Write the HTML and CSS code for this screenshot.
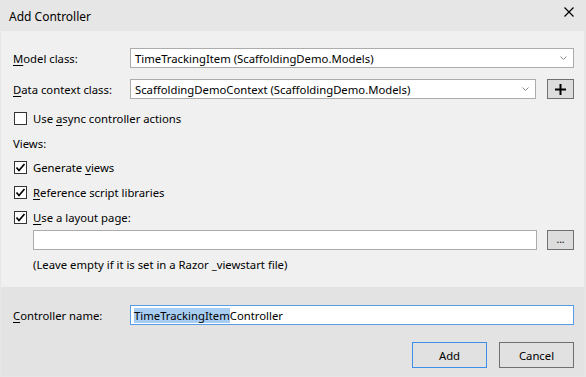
FILE: index.html
```html
<!DOCTYPE html>
<html>
<head>
<meta charset="utf-8">
<link rel="stylesheet" href="styles.css">
</head>
<body>
<div class="dialog">
  <div class="titlebar">
    <span class="title">Add Controller</span>
    <svg class="close" width="10" height="10" viewBox="0 0 10 10"><path d="M0.5 0.5L9.5 9.5M9.5 0.5L0.5 9.5" stroke="#000" stroke-width="1.2"/></svg>
  </div>
  <div class="content">
    <div class="row r1">
      <span class="label"><u>M</u>odel class:</span>
      <div class="combo wide"><span>TimeTrackingItem (ScaffoldingDemo.Models)</span><svg class="chev" width="7" height="4" viewBox="0 0 7 4"><path d="M0.5 0.5L3.5 3.5L6.5 0.5" fill="none" stroke="#8a8a8a"/></svg></div>
    </div>
    <div class="row r2">
      <span class="label"><u>D</u>ata context class:</span>
      <div class="combo"><span>ScaffoldingDemoContext (ScaffoldingDemo.Models)</span><svg class="chev" width="7" height="4" viewBox="0 0 7 4"><path d="M0.5 0.5L3.5 3.5L6.5 0.5" fill="none" stroke="#8a8a8a"/></svg></div>
      <div class="sqbtn"><svg width="11" height="11" viewBox="0 0 11 11"><path d="M5.5 0V11M0 5.5H11" stroke="#000" stroke-width="2"/></svg></div>
    </div>
    <div class="check r3"><span class="box"></span><span>Use <u>a</u>sync controller actions</span></div>
    <div class="views">Views:</div>
    <div class="check r5"><span class="box on"><svg width="11" height="11" viewBox="0 0 11 11"><path d="M1.5 5.5L4 8.5L9.5 2" fill="none" stroke="#000" stroke-width="1.7"/></svg></span><span>Generate <u>v</u>iews</span></div>
    <div class="check r6"><span class="box on"><svg width="11" height="11" viewBox="0 0 11 11"><path d="M1.5 5.5L4 8.5L9.5 2" fill="none" stroke="#000" stroke-width="1.7"/></svg></span><span><u>R</u>eference script libraries</span></div>
    <div class="check r7"><span class="box on"><svg width="11" height="11" viewBox="0 0 11 11"><path d="M1.5 5.5L4 8.5L9.5 2" fill="none" stroke="#000" stroke-width="1.7"/></svg></span><span><u>U</u>se a layout page:</span></div>
    <div class="row r8">
      <div class="text"></div>
      <div class="sqbtn dots">...</div>
    </div>
    <div class="hint">(Leave empty if it is set in a Razor _viewstart file)</div>
  </div>
  <div class="footer">
    <div class="row f1">
      <span class="label"><u>C</u>ontroller name:</span>
      <div class="text focus"><span class="sel">TimeTrackingItem</span>Controller</div>
    </div>
    <div class="buttons">
      <div class="btn default">Add</div>
      <div class="btn">Cancel</div>
    </div>
  </div>
</div>
</body>
</html>
```
FILE: styles.css
```css
html, body { margin: 0; padding: 0; }
body {
  width: 586px; height: 377px; overflow: hidden;
  font-family: "Segoe UI", "Noto Sans", "Open Sans", sans-serif;
  font-size: 11.3px; color: #000;
}
.dialog {
  width: 586px; height: 377px; box-sizing: border-box;
  background: #e6e6e6; padding: 0 2px 1px 1px;
  display: flex; flex-direction: column;
}
u { text-decoration: underline; text-underline-offset: 2px; }
.titlebar {
  height: 31px; flex: none; display: flex; align-items: center;
  justify-content: space-between; padding: 0 10px 0 8px;
  box-sizing: border-box; position: relative;
}
.title { font-size: 12px; margin-top: 1px; }
.close { margin-top: -7px; }
.content {
  background: #f0f0f0; height: 256px; flex: none; box-sizing: border-box;
  padding: 17px 10px 0 12px; display: flex; flex-direction: column;
}
.row { display: flex; align-items: center; height: 20px; }
.label { width: 117px; flex: none; }
.combo, .text {
  height: 20px; box-sizing: border-box; border: 1px solid #acacac; background: #fff;
  display: flex; align-items: center; padding: 0 6px 0 4px; flex: 1;
}
.combo span { flex: 1; }
.chev { flex: none; margin-right: 0px; }
.r2 .combo { flex: none; width: 406px; }
.sqbtn {
  width: 27px; height: 20px; box-sizing: border-box; border: 1px solid #707070;
  background: #dddddd; margin-left: auto; display: flex; align-items: center; justify-content: center;
}
.dots { font-size: 10px; line-height: 1; padding-bottom: 3px; }
.r2 { margin-top: 11px; }
.check { display: flex; align-items: center; height: 13px; }
.box {
  width: 13px; height: 13px; box-sizing: border-box; border: 1px solid #333;
  background: #fff; margin: 0 6px 0 1px; flex: none; display: flex; align-items: center; justify-content: center;
}
.r3 { margin-top: 13px; }
.views { margin-top: 11px; height: 16px; line-height: 16px; }
.r5 { margin-top: 9px; }
.r6, .r7 { margin-top: 12px; }
.r8 { margin-top: 6px; padding-left: 20px; }
.r8 .text { flex: none; width: 504px; }
.hint { margin-top: 7px; height: 16px; line-height: 16px; padding-left: 20px; }
.footer {
  flex: 1; background: #e3e3e3; padding: 18px 10px 0 12px; box-sizing: border-box;
  display: flex; flex-direction: column;
}
.text.focus { border-color: #569de5; padding-left: 3px; }
.sel { background: #a8cdf3; }
.buttons { display: flex; justify-content: flex-end; gap: 12px; margin-top: 17px; }
.btn {
  width: 75px; height: 26px; box-sizing: border-box; border: 1px solid #707070;
  background: #e1e1e1; display: flex; align-items: center; justify-content: center;
}
.btn.default { border-color: #3c8ee8; }
```
